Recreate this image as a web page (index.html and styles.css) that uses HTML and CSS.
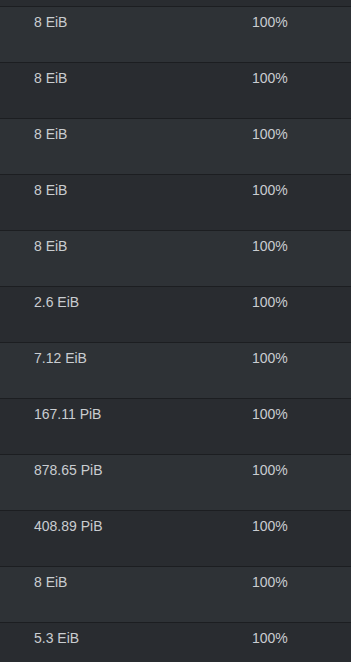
FILE: index.html
```html
<!DOCTYPE html>
<html>
<head>
<meta charset="utf-8">
<link rel="stylesheet" href="styles.css">
</head>
<body>
<div class="table">
  <div class="row"><div class="cell">8 EiB</div><div class="cell">100%</div></div>
  <div class="row"><div class="cell">8 EiB</div><div class="cell">100%</div></div>
  <div class="row"><div class="cell">8 EiB</div><div class="cell">100%</div></div>
  <div class="row"><div class="cell">8 EiB</div><div class="cell">100%</div></div>
  <div class="row"><div class="cell">8 EiB</div><div class="cell">100%</div></div>
  <div class="row"><div class="cell">2.6 EiB</div><div class="cell">100%</div></div>
  <div class="row"><div class="cell">7.12 EiB</div><div class="cell">100%</div></div>
  <div class="row"><div class="cell">167.11 PiB</div><div class="cell">100%</div></div>
  <div class="row"><div class="cell">878.65 PiB</div><div class="cell">100%</div></div>
  <div class="row"><div class="cell">408.89 PiB</div><div class="cell">100%</div></div>
  <div class="row"><div class="cell">8 EiB</div><div class="cell">100%</div></div>
  <div class="row"><div class="cell">5.3 EiB</div><div class="cell">100%</div></div>
</div>
</body>
</html>
```
FILE: styles.css
```css
html, body {
  margin: 0;
  padding: 0;
  background: #292c30;
  height: 100%;
  overflow: hidden;
}
.table {
  margin-top: 6px;
  font-family: "Liberation Sans", Arial, sans-serif;
  font-size: 14px;
  line-height: 20px;
  color: #c9cdd1;
}
.row {
  display: grid;
  grid-template-columns: 218px 1fr;
  height: 56px;
  box-sizing: border-box;
  border-top: 1px solid #1c1e21;
  padding: 5px 0 0 34px;
  background: #2e3236;
}
.row:nth-child(even) {
  background: #292c30;
}
```
